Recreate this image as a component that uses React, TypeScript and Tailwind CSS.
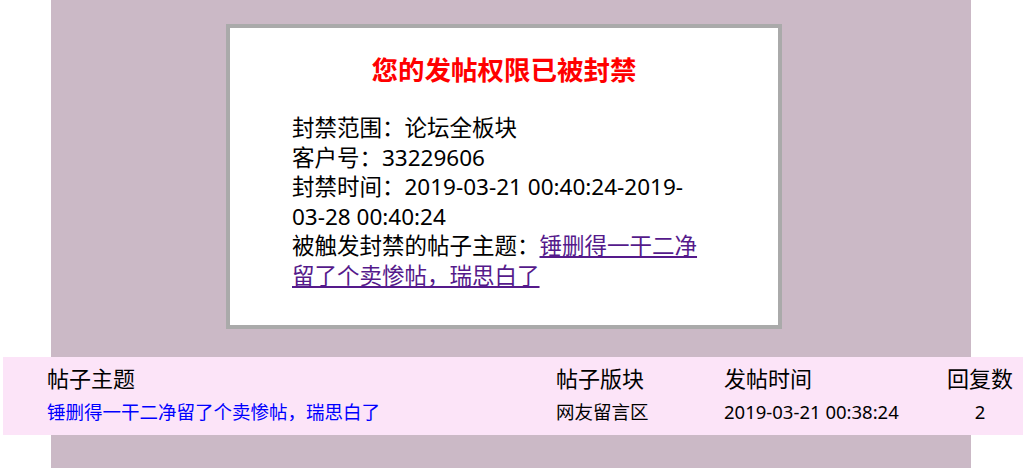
import React from 'react';

const font = { fontFamily: '"Noto Sans", "Noto Sans CJK SC", sans-serif' };

const BanNotice = () => (
  <div className="ml-[175px] mt-[23px] w-[556px] border-4 border-[#aaaaaa] bg-white pt-[25px] pb-[35px]">
    <h1 className="text-center text-[26.5px] font-bold leading-[34px] text-[#ff0000]">
      您的发帖权限已被封禁
    </h1>
    <div className="mt-[26px] pl-[62px] pr-[74px] text-[22.5px] leading-[29.5px] text-black">
      <p>封禁范围：论坛全板块</p>
      <p>客户号：33229606</p>
      <p>封禁时间：2019-03-21 00:40:24-2019-03-28 00:40:24</p>
      <p>
        被触发封禁的帖子主题：
        <a href="#" className="text-[#551a8b] underline">
          锤删得一干二净留了个卖惨帖，瑞思白了
        </a>
      </p>
    </div>
  </div>
);

const PostTable = () => (
  <div className="mt-[28px] -ml-[48px] w-[1030px] bg-[#fce4f8] pt-[6px] pb-2 pl-[44px]">
    <div className="grid grid-cols-[509px_168px_222px_68px] text-[22px] leading-[30px] text-black">
      <div>帖子主题</div>
      <div>帖子版块</div>
      <div>发帖时间</div>
      <div className="text-center">回复数</div>
    </div>
    <div className="mt-[4px] grid grid-cols-[509px_168px_222px_68px] text-[18.5px] leading-[30px] text-black">
      <a href="#" className="text-[#0000ff]">
        锤删得一干二净留了个卖惨帖，瑞思白了
      </a>
      <div>网友留言区</div>
      <div>2019-03-21 00:38:24</div>
      <div className="text-center">2</div>
    </div>
  </div>
);

export default function App() {
  return (
    <div className="h-[468px] w-[1023px] overflow-hidden bg-white" style={font}>
      <div className="ml-[51px] h-full w-[920px] bg-[#cbb9c6] pt-px">
        <BanNotice />
        <PostTable />
      </div>
    </div>
  );
}
